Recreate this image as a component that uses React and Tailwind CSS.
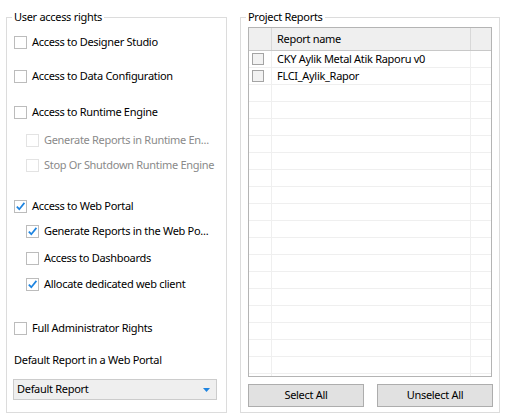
import React from "react";

const Check = ({ checked, disabled }) => (
    <span
        className={
            "flex h-[13px] w-[13px] shrink-0 items-center justify-center border bg-white " +
            (disabled ? "border-[#e3e3e3]" : "border-[#bcbcbc]")
        }
    >
        {checked && (
            <svg width="11" height="11" viewBox="0 0 11 11">
                <path d="M1.8 5.6 L4.3 8.2 L9.4 1.9" fill="none" stroke="#1e84e0" strokeWidth="1.7" />
            </svg>
        )}
    </span>
);

const Row = ({ label, checked, disabled, indent, mt }) => (
    <div className={"flex h-[16px] items-center gap-[5px] " + (indent ? "pl-[19px] " : "pl-[7px] ") + mt}>
        <Check checked={checked} disabled={disabled} />
        <span className={"whitespace-nowrap " + (disabled ? "text-[#8a8a8a]" : "text-black")}>{label}</span>
    </div>
);

const GroupBox = ({ title, width, children }) => (
    <div className={"relative h-[396px] shrink-0 border border-[#dcdcdc] " + width}>
        <span className="absolute -top-[9px] left-[5px] bg-white px-[2px] leading-[16px]">{title}</span>
        {children}
    </div>
);

const reports = ["CKY Aylik Metal Atik Raporu v0", "FLCI_Aylik_Rapor"];

const App = () => {
    const empty = Array.from({ length: 18 });
    return (
        <div
            className="flex h-[417px] w-[523px] gap-[13px] overflow-hidden bg-white pl-[6px] pt-[17px] text-[11px] tracking-[-0.3px] text-black"
            style={{ fontFamily: '"Noto Sans", "Open Sans", sans-serif' }}
        >
            <GroupBox title="User access rights" width="w-[221px]">
                <div className="flex flex-col">
                    <Row label="Access to Designer Studio" mt="mt-[16px]" />
                    <Row label="Access to Data Configuration" mt="mt-[18px]" />
                    <Row label="Access to Runtime Engine" mt="mt-[20px]" />
                    <Row label="Generate Reports in Runtime En..." disabled indent mt="mt-[12px]" />
                    <Row label="Stop Or Shutdown Runtime Engine" disabled indent mt="mt-[9px]" />
                    <Row label="Access to Web Portal" checked mt="mt-[25px]" />
                    <Row label="Generate Reports in the Web Po..." checked indent mt="mt-[9px]" />
                    <Row label="Access to Dashboards" indent mt="mt-[11px]" />
                    <Row label="Allocate dedicated web client" checked indent mt="mt-[10px]" />
                    <Row label="Full Administrator Rights" mt="mt-[28px]" />
                    <div className="mt-[16px] h-[16px] pl-[7px] leading-[16px]">Default Report in a Web Portal</div>
                    <div className="ml-[6px] mt-[11px] flex h-[21px] w-[204px] items-center justify-between border border-[#cccccc] bg-[#efefef] pl-[3px] pr-[6px]">
                        <span>Default Report</span>
                        <svg width="7" height="4" viewBox="0 0 7 4">
                            <path d="M0 0 H7 L3.5 4 Z" fill="#1e84e0" />
                        </svg>
                    </div>
                </div>
            </GroupBox>

            <GroupBox title="Project Reports" width="w-[260px]">
                <div className="ml-[7px] mt-[9px] flex h-[350px] w-[244px] flex-col overflow-hidden border border-[#b4b4b4]">
                    <div className="flex h-[23px] shrink-0 border-b border-[#c8c8c8] bg-[#efefef]">
                        <div className="w-[23px] border-r border-[#d8d8d8]" />
                        <div className="flex w-[199px] items-center border-r border-[#d8d8d8] pl-[5px]">Report name</div>
                        <div className="flex-1" />
                    </div>
                    {reports.map((r) => (
                        <div key={r} className="flex h-[17px] shrink-0 border-b border-[#efefef]">
                            <div className="flex w-[23px] items-center border-r border-[#efefef] pl-[3px]">
                                <span className="h-[12px] w-[12px] border border-[#a4a4a4] bg-[#f2f2f2]" />
                            </div>
                            <div className="flex w-[199px] items-center whitespace-nowrap border-r border-[#efefef] pl-[5px]">{r}</div>
                            <div className="flex-1" />
                        </div>
                    ))}
                    {empty.map((_, i) => (
                        <div key={i} className="flex h-[17px] shrink-0 border-b border-[#efefef]">
                            <div className="w-[23px] border-r border-[#efefef]" />
                            <div className="w-[199px] border-r border-[#efefef]" />
                            <div className="flex-1" />
                        </div>
                    ))}
                </div>
                <div className="ml-[7px] mt-[7px] flex gap-[13px]">
                    <button className="h-[23px] w-[116px] border border-[#adadad] bg-[#e1e1e1]">Select All</button>
                    <button className="h-[23px] w-[116px] border border-[#adadad] bg-[#e1e1e1]">Unselect All</button>
                </div>
            </GroupBox>
        </div>
    );
};

export default App;
